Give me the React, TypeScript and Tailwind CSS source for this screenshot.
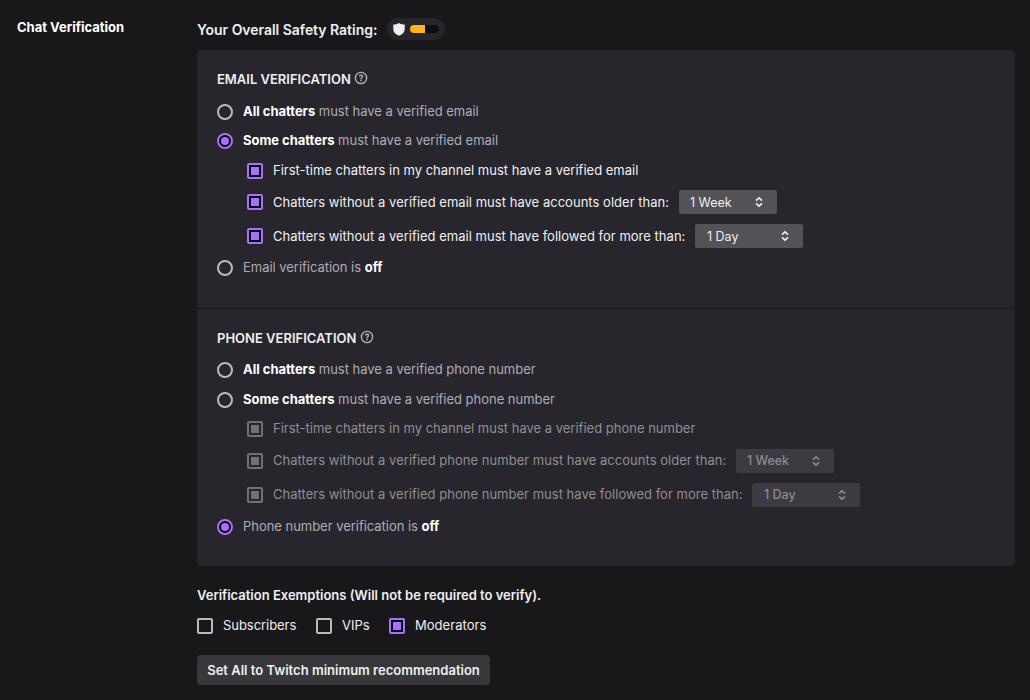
import type { ReactNode } from "react";

function HelpIcon() {
  return (
    <svg width="14" height="14" viewBox="0 0 20 20" fill="#b0b0b6" className="-mt-0.5">
      <path d="M9 8a1 1 0 1 1 1.7.7A4.6 4.6 0 0 0 9 12h2c0-.9.4-1.3 1-1.9A3 3 0 1 0 7 8h2zM11 13v2H9v-2h2z" />
      <path fillRule="evenodd" d="M10 1a9 9 0 1 1 0 18 9 9 0 0 1 0-18zm0 2a7 7 0 1 0 0 14 7 7 0 0 0 0-14z" />
    </svg>
  );
}

function Radio({ on }: { on?: boolean }) {
  return on ? (
    <span className="flex size-4 shrink-0 items-center justify-center rounded-full border-2 border-[#a970ff] bg-black">
      <span className="size-2 rounded-full bg-[#a970ff]" />
    </span>
  ) : (
    <span className="size-4 shrink-0 rounded-full border-2 border-[#bbbbbd]" />
  );
}

function Check({ on, disabled }: { on?: boolean; disabled?: boolean }) {
  if (disabled) {
    return (
      <span className="flex size-4 shrink-0 items-center justify-center rounded-[2px] border-2 border-[#717173]">
        <span className="size-2 bg-[#717173]" />
      </span>
    );
  }
  return on ? (
    <span className="flex size-4 shrink-0 items-center justify-center rounded-[2px] border-2 border-[#a970ff] bg-black">
      <span className="size-2 bg-[#a970ff]" />
    </span>
  ) : (
    <span className="size-4 shrink-0 rounded-[2px] border-2 border-[#bbbbbd]" />
  );
}

function Row({ className, children }: { className: string; children: ReactNode }) {
  return <div className={`flex h-6 items-center gap-2.5 whitespace-nowrap ${className}`}>{children}</div>;
}

function Select({ value, className, disabled }: { value: string; className: string; disabled?: boolean }) {
  const tone = disabled ? "bg-[#3c3b41] text-[#8c8c8f]" : "bg-[#535257] text-[#efeff1]";
  return (
    <span className={`flex h-6 shrink-0 items-center justify-between rounded-[2px] pr-[13px] text-[12.5px] ${tone} ${className}`}>
      <span className={disabled ? "font-medium" : "pt-0.5"}>{value}</span>
      <svg width="10" height="12" viewBox="0 0 10 12" fill="none" stroke="currentColor" strokeWidth="1.6">
        <path d="M2 4.6 5 1.800 8 4.600M2 7.400 5 10.200 8 7.400" />
      </svg>
    </span>
  );
}

function Title({ className, children }: { className: string; children: ReactNode }) {
  return (
    <div className={`flex h-6 items-center text-[13px] font-semibold ${className}`}>
      <span>{children}</span>
      <HelpIcon />
    </div>
  );
}

function Choice({ who, rest }: { who: string; rest: string }) {
  return (
    <span className="pb-0.5 tracking-[-0.02px] text-[#adadb8]">
      <b className="font-bold text-white">{who}</b> {rest}
    </span>
  );
}

export default function App() {
  return (
    <div className="flex h-[700px] w-[1030px] overflow-hidden bg-[#18181a] font-['Inter',sans-serif] text-[13px] leading-4 text-[#efeff1]">
      <div className="w-[197px] shrink-0 pt-[19px] pl-[17px] font-bold text-white">Chat Verification</div>
      <main className="w-[818px] pt-[18px]">
        <div className="flex h-[22px] items-center">
          <h1 className="w-[190px] pt-0.5 text-[14px] font-semibold tracking-[-0.03px]">Your Overall Safety Rating:</h1>
          <div className="flex h-[22px] w-[58px] items-center gap-[5px] rounded-full bg-[#26252c] pl-1.5">
            <svg width="12" height="13" viewBox="0 0 12 13" fill="#efeff1">
              <path d="M6 0C7.700 1 9.800 1.500 11.700 1.600V6c0 3.200-1.900 5.500-5.700 6.700C2.200 11.500.3 9.200.3 6V1.600C2.200 1.500 4.300 1 6 0z" />
            </svg>
            <span className="flex h-2 w-[29px] overflow-hidden rounded-full bg-[#0e0e10]">
              <span className="h-2 w-[15px] bg-[#ffb31a]" />
            </span>
          </div>
        </div>

        <div className="mt-2.5 h-[516px] rounded-[5px] bg-[#27262c]">
          <section className="h-[259px] border-b border-[#18181b] px-5 pt-[17px]">
            <Title className="gap-[3px]">EMAIL VERIFICATION</Title>
            <Row className="mt-[9px]">
              <Radio />
              <Choice who="All chatters" rest="must have a verified email" />
            </Row>
            <Row className="mt-[5px]">
              <Radio on />
              <Choice who="Some chatters" rest="must have a verified email" />
            </Row>
            <Row className="mt-1.5 pl-[30px]">
              <Check on />
              <span className="pb-0.5">First-time chatters in my channel must have a verified email</span>
            </Row>
            <Row className="mt-[7px] pl-[30px]">
              <Check on />
              <span className="w-[396px] tracking-[0.025px]">Chatters without a verified email must have accounts older than:</span>
              <Select value="1 Week" className="w-[98px] pl-[11px]" />
            </Row>
            <Row className="mt-2.5 pl-[30px]">
              <Check on />
              <span className="w-[412px] tracking-[0.02px]">Chatters without a verified email must have followed for more than:</span>
              <Select value="1 Day" className="w-[108px] pl-3" />
            </Row>
            <Row className="mt-2">
              <Radio />
              <span className="pb-0.5 tracking-[-0.03px] text-[#adadb8]">
                Email verification is <b className="text-white">off</b>
              </span>
            </Row>
          </section>

          <section className="px-5 pt-[17px]">
            <Title className="gap-1">PHONE VERIFICATION</Title>
            <Row className="mt-2">
              <Radio />
              <Choice who="All chatters" rest="must have a verified phone number" />
            </Row>
            <Row className="mt-1.5">
              <Radio />
              <Choice who="Some chatters" rest="must have a verified phone number" />
            </Row>
            <Row className="mt-[5px] pl-[30px] text-[#8f8f92]">
              <Check disabled />
              <span className="pb-0.5">First-time chatters in my channel must have a verified phone number</span>
            </Row>
            <Row className="mt-2 pl-[30px] text-[#8f8f92]">
              <Check disabled />
              <span className="w-[453px] pb-0.5 tracking-[0.025px]">Chatters without a verified phone number must have accounts older than:</span>
              <Select disabled value="1 Week" className="w-[98px] pl-[11px]" />
            </Row>
            <Row className="mt-2.5 pl-[30px] text-[#8f8f92]">
              <Check disabled />
              <span className="w-[469px] pb-0.5 tracking-[0.02px]">Chatters without a verified phone number must have followed for more than:</span>
              <Select disabled value="1 Day" className="w-[108px] pl-3" />
            </Row>
            <Row className="mt-2">
              <Radio on />
              <span className="pb-0.5 tracking-[-0.03px] text-[#adadb8]">
                Phone number verification is <b className="text-white">off</b>
              </span>
            </Row>
          </section>
        </div>

        <h2 className="mt-[21px] font-semibold">Verification Exemptions (Will not be required to verify).</h2>
        <div className="mt-[11px] flex h-6 items-center">
          <Row className="w-[119px]">
            <Check />
            <span className="pb-0.5 tracking-[-0.05px]">Subscribers</span>
          </Row>
          <Row className="w-[73px]">
            <Check />
            <span className="pb-0.5">VIPs</span>
          </Row>
          <Row className="">
            <Check on />
            <span className="pb-0.5 tracking-[0.04px]">Moderators</span>
          </Row>
        </div>
        <button className="mt-[17px] flex h-[30px] w-[293px] items-center justify-center rounded-[4px] bg-[#38383a] font-semibold tracking-[0.01px] whitespace-nowrap">
          Set All to Twitch minimum recommendation
        </button>
      </main>
    </div>
  );
}
